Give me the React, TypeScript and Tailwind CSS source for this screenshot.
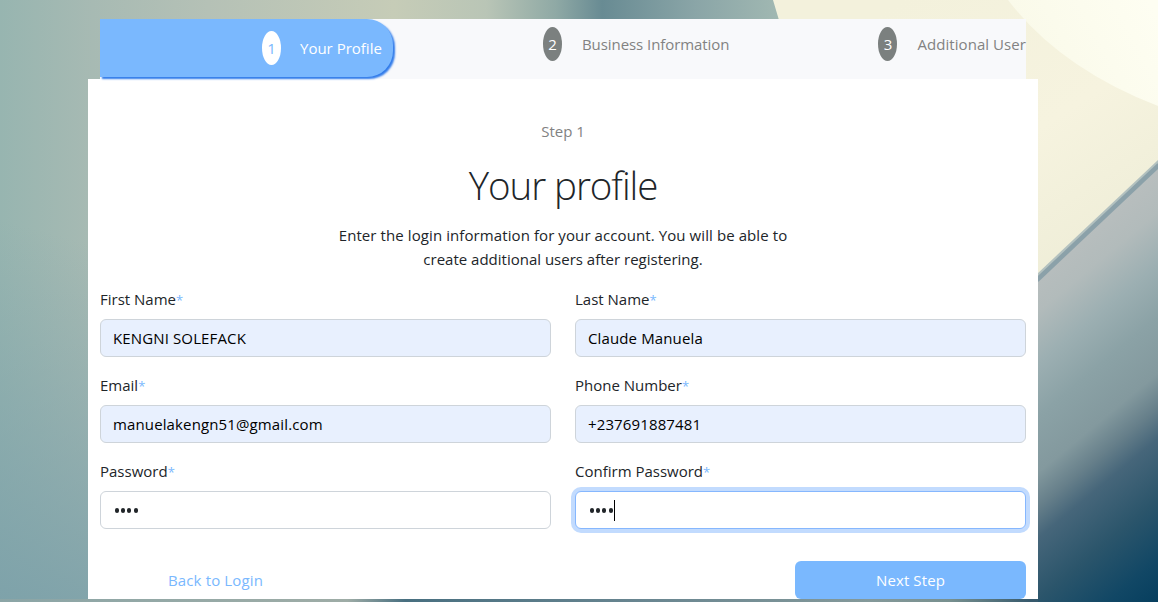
import type { ReactNode } from "react";

function Backdrop() {
  return (
    <svg className="absolute inset-0 h-full w-full" viewBox="0 0 1158 602" preserveAspectRatio="none" aria-hidden="true">
      <defs>
        <linearGradient id="base" x1="0" y1="0" x2="1158" y2="0" gradientUnits="userSpaceOnUse">
          <stop offset="0" stopColor="#97b5b0" />
          <stop offset="0.08" stopColor="#a7bab3" />
          <stop offset="0.18" stopColor="#b5c1b6" />
          <stop offset="0.34" stopColor="#c6ccb7" />
          <stop offset="0.42" stopColor="#b9c5b6" />
          <stop offset="0.48" stopColor="#8fa9a5" />
          <stop offset="0.52" stopColor="#688b93" />
          <stop offset="0.6" stopColor="#8aa5a7" />
          <stop offset="0.68" stopColor="#a3bab3" />
        </linearGradient>
        <linearGradient id="leftShade" x1="80" y1="240" x2="-20" y2="620" gradientUnits="userSpaceOnUse">
          <stop offset="0" stopColor="#7ba0a9" stopOpacity="0" />
          <stop offset="1" stopColor="#7ba0a9" stopOpacity="0.95" />
        </linearGradient>
        <linearGradient id="cream" x1="900" y1="0" x2="1080" y2="280" gradientUnits="userSpaceOnUse">
          <stop offset="0" stopColor="#f3f1dc" />
          <stop offset="0.55" stopColor="#f6f3df" />
          <stop offset="1" stopColor="#eeedd7" />
        </linearGradient>
        <linearGradient id="glow" x1="1040" y1="60" x2="1150" y2="0" gradientUnits="userSpaceOnUse">
          <stop offset="0" stopColor="#fafaea" />
          <stop offset="1" stopColor="#fefef2" />
        </linearGradient>
        <linearGradient id="deep" x1="1038" y1="268" x2="1252" y2="526" gradientUnits="userSpaceOnUse">
          <stop offset="0" stopColor="#b8bebe" />
          <stop offset="0.1" stopColor="#b2bbbb" />
          <stop offset="0.22" stopColor="#9cafb2" />
          <stop offset="0.34" stopColor="#8ba2a6" />
          <stop offset="0.47" stopColor="#83999e" />
          <stop offset="0.55" stopColor="#667f8a" />
          <stop offset="0.62" stopColor="#46667a" />
          <stop offset="0.76" stopColor="#2b556b" />
          <stop offset="0.9" stopColor="#114765" />
          <stop offset="1" stopColor="#063e5e" />
        </linearGradient>
        <linearGradient id="floor" x1="0" y1="0" x2="1158" y2="0" gradientUnits="userSpaceOnUse">
          <stop offset="0" stopColor="#8ba5a6" />
          <stop offset="0.3" stopColor="#9eaca6" />
          <stop offset="0.35" stopColor="#486f80" />
          <stop offset="0.55" stopColor="#688590" />
          <stop offset="0.75" stopColor="#84999a" />
          <stop offset="0.82" stopColor="#78908f" />
          <stop offset="0.89" stopColor="#36596c" />
        </linearGradient>
      </defs>
      <rect width="1158" height="602" fill="url(#base)" />
      <rect width="100" height="602" fill="url(#leftShade)" />
      <path d="M773 0H1158V162L1038 274H850Q800 90 773 0Z" fill="url(#cream)" />
      <path d="M1008 0Q1060 68 1158 106V0Z" fill="url(#glow)" />
      <path d="M1158 162L1038 274V602H1158Z" fill="url(#deep)" />
      <path d="M1159 161L1037 276" stroke="#b3c1bf" strokeWidth="3" fill="none" />
      <path d="M1159 165L1037 280" stroke="#8ba1a9" strokeWidth="4.5" fill="none" />
      <rect y="599" width="1038" height="3" fill="url(#floor)" />
    </svg>
  );
}

function StepBadge({ n, active = false }: { n: number; active?: boolean }) {
  return (
    <span
      className={
        active
          ? "flex h-[34px] w-[19px] items-center justify-center rounded-[50%] bg-white text-[#7ab8fe]"
          : "flex h-[34px] w-[19px] items-center justify-center rounded-[50%] bg-[#7b807f] text-white"
      }
    >
      {n}
    </span>
  );
}

function Field({ label, children }: { label: string; children: ReactNode }) {
  return (
    <div>
      <div className="mb-2 h-6 leading-6">
        {label}
        <span className="text-[13px] text-[#7ab8fe]">*</span>
      </div>
      {children}
    </div>
  );
}

function Filled({ value }: { value: string }) {
  return (
    <div className="flex h-[38px] items-center rounded-md border border-[#ced4da] bg-[#e8f0fe] px-3 tracking-[0.13px] text-black">
      {value}
    </div>
  );
}

function Dots() {
  return (
    <span className="flex gap-[2.2px] pt-px pl-[1.5px]">
      {[0, 1, 2, 3].map((i) => (
        <span key={i} className="size-[4.2px] rounded-full bg-[#212529]" />
      ))}
    </span>
  );
}

export default function App() {
  return (
    <div className="relative h-[602px] w-[1158px] overflow-hidden font-['Open_Sans',sans-serif] text-[15px] leading-6 text-[#212529]">
      <Backdrop />
      <main className="relative ml-[88px] w-[950px] pt-[19px]">
        <nav className="relative z-10 mx-3 flex h-[60px] bg-[#f8f9fb] text-[#828282]">
          <div className="flex h-[58px] w-[293px] items-center rounded-r-[26px] bg-[#7ab8fe] pl-[162px] text-white shadow-[2px_2px_2px_#307bea]">
            <StepBadge n={1} active />
            <span className="ml-[19px] whitespace-nowrap">Your Profile</span>
          </div>
          <div className="flex h-[50px] items-center pl-[150px]">
            <StepBadge n={2} />
            <span className="ml-5 tracking-[-0.07px] whitespace-nowrap">Business Information</span>
          </div>
          <div className="ml-auto flex h-[50px] items-center">
            <StepBadge n={3} />
            <span className="ml-5 tracking-[0.06px] whitespace-nowrap">Additional User</span>
          </div>
        </nav>
        <section className="h-[520px] bg-white px-3 pt-10">
          <header className="text-center">
            <p className="text-[#828282]">Step 1</p>
            <h1 className="mt-[18px] h-12 text-[38.5px] leading-[48px] font-light tracking-[-1.05px]">Your profile</h1>
            <p className="mt-[14px]">
              <span className="tracking-[0.09px]">Enter the login information for your account. You will be able to</span>
              <br />
              create additional users after registering.
            </p>
          </header>
          <form className="mt-4 grid grid-cols-2 gap-x-6 gap-y-4">
            <Field label="First Name"><Filled value="KENGNI SOLEFACK" /></Field>
            <Field label="Last Name"><Filled value="Claude Manuela" /></Field>
            <Field label="Email"><Filled value="manuelakengn51@gmail.com" /></Field>
            <Field label="Phone Number"><Filled value="+237691887481" /></Field>
            <Field label="Password">
              <div className="flex h-[38px] items-center rounded-md border border-[#ced4da] bg-white px-3"><Dots /></div>
            </Field>
            <Field label="Confirm Password">
              <div className="flex h-[38px] items-center rounded-md border border-[#86b7fe] bg-white px-3 shadow-[0_0_0_4px_#c2dbfe]">
                <Dots />
                <span className="ml-px h-[21px] w-px bg-black" />
              </div>
            </Field>
          </form>
          <footer className="mt-8 flex items-center justify-between">
            <a className="w-[231px] text-center tracking-[0.15px] text-[#7ab8fe]">Back to Login</a>
            <button type="button" className="h-[38px] w-[231px] rounded-md bg-[#7ab8fe] tracking-[0.1px] text-white">Next Step</button>
          </footer>
        </section>
      </main>
    </div>
  );
}
